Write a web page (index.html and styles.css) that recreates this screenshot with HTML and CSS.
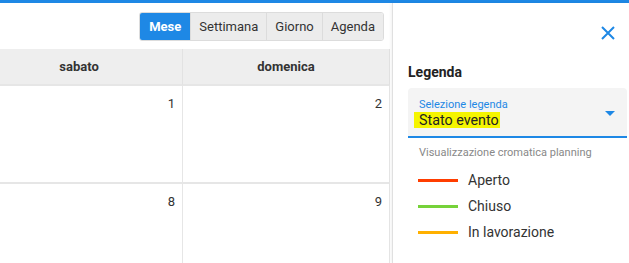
FILE: index.html
```html
<!DOCTYPE html>
<html lang="it">
<head>
  <meta charset="UTF-8" />
  <meta name="viewport" content="width=device-width, initial-scale=1.0"/>
  <title>Planning</title>
  <link rel="stylesheet" href="styles.css">
</head>
<body>

<div class="topbar"></div>

<div class="main">
  <!-- Calendario -->
  <div class="calendar">
    <div class="toolbar">
      <div class="view-switch">
        <button class="active">Mese</button>
        <button>Settimana</button>
        <button>Giorno</button>
        <button>Agenda</button>
      </div>
    </div>

    <div class="month">
      <div class="grid">
        <div class="head">sabato</div>
        <div class="head">domenica</div>
        <div class="day">1</div>
        <div class="day">2</div>
        <div class="day">8</div>
        <div class="day">9</div>
      </div>
    </div>
  </div>

  <!-- Pannello legenda -->
  <aside class="panel">
    <div class="panel-top">
      <button class="close" aria-label="Chiudi">
        <svg width="14" height="14" viewBox="0 0 14 14">
          <path d="M1 1 L13 13 M13 1 L1 13" stroke="#1e88e5" stroke-width="2" fill="none"/>
        </svg>
      </button>
    </div>

    <h3 class="panel-title">Legenda</h3>

    <div class="select">
      <div class="select-text">
        <span class="select-label">Selezione legenda</span>
        <span class="select-value"><mark>Stato evento</mark></span>
      </div>
      <span class="select-arrow"></span>
    </div>
    <div class="hint">Visualizzazione cromatica planning</div>

    <ul class="legend">
      <li><span class="swatch open"></span>Aperto</li>
      <li><span class="swatch closed"></span>Chiuso</li>
      <li><span class="swatch working"></span>In lavorazione</li>
    </ul>
  </aside>
</div>

</body>
</html>
```

FILE: styles.css
```css
* {
  margin: 0;
  padding: 0;
  box-sizing: border-box;
}

html, body {
  width: 629px;
  height: 263px;
  overflow: hidden;
}

body {
  font-family: Roboto, "Liberation Sans", Arial, sans-serif;
  color: #333;
  background-color: #fff;
}

.topbar {
  height: 3px;
  background-color: #1e88e5;
}

.main {
  display: flex;
  height: 260px;
}

/* Calendario */
.calendar {
  width: 392px;
  flex-shrink: 0;
  overflow: hidden;
}

.toolbar {
  display: flex;
  justify-content: flex-end;
  padding: 9px 8px 0 0;
  height: 46px;
}

.view-switch {
  display: flex;
  height: 29px;
  border: 1px solid #dcdcdc;
  border-radius: 3px;
  overflow: hidden;
}

.view-switch button {
  font-family: inherit;
  font-size: 13px;
  color: #333;
  background-color: #ececec;
  border: none;
  border-left: 1px solid #dcdcdc;
  padding: 0 8px;
  cursor: pointer;
}

.view-switch button:first-child {
  border-left: none;
}

.view-switch button.active {
  background-color: #1e88e5;
  color: #fff;
  font-weight: bold;
  padding: 0 9px;
}

.month {
  overflow: hidden;
}

.grid {
  display: grid;
  grid-template-columns: 207px 207px;
  grid-template-rows: 37px 98px 98px;
  margin-left: -24px;
  width: 416px;
}

.head {
  background-color: #eeeeee;
  border-right: 1px solid #e2e2e2;
  border-bottom: 2px solid #e6e6e6;
  font-size: 13px;
  font-weight: bold;
  display: flex;
  align-items: center;
  justify-content: center;
}

.day {
  border-right: 1px solid #e6e6e6;
  border-bottom: 2px solid #e6e6e6;
  font-size: 13px;
  text-align: right;
  padding: 10px 7px 0 0;
}

/* Pannello legenda */
.panel {
  flex: 1;
  border-left: 1px solid #e0e0e0;
  box-shadow: -1px 0 3px rgba(0,0,0,0.06);
  padding: 0 2px 0 15px;
}

.panel-top {
  display: flex;
  justify-content: flex-end;
  padding: 23px 12px 0 0;
  height: 59px;
}

.close {
  background: none;
  border: none;
  width: 14px;
  height: 14px;
  cursor: pointer;
}

.close svg {
  display: block;
}

.panel-title {
  font-size: 14px;
  font-weight: bold;
  color: #222;
  line-height: 20px;
  margin-bottom: 6px;
}

.select {
  display: flex;
  align-items: center;
  justify-content: space-between;
  height: 50px;
  background-color: #f4f4f4;
  border-radius: 4px 4px 0 0;
  border-bottom: 2px solid #1e88e5;
  padding: 0 12px 0 6px;
}

.select-text {
  display: flex;
  flex-direction: column;
  padding-top: 2px;
}

.select-label {
  font-size: 11px;
  color: #1e88e5;
  padding-left: 5px;
  line-height: 13px;
}

.select-value {
  font-size: 14.3px;
  line-height: 18px;
}

.select-value mark {
  background-color: #f5f500;
  color: #222;
  padding: 0 1px 0 5px;
}

.select-arrow {
  width: 0;
  height: 0;
  border-left: 5px solid transparent;
  border-right: 5px solid transparent;
  border-top: 5px solid #1e88e5;
  margin-top: 2px;
}

.hint {
  font-size: 11px;
  color: #888;
  padding: 8px 0 0 11px;
  line-height: 13px;
}

.legend {
  list-style: none;
  padding: 8px 0 0 10px;
}

.legend li {
  display: flex;
  align-items: center;
  gap: 10px;
  font-size: 14px;
  color: #333;
  height: 26px;
}

.swatch {
  width: 40px;
  height: 3px;
}

.swatch.open {
  background-color: #ff3d00;
}

.swatch.closed {
  background-color: #76d23a;
}

.swatch.working {
  background-color: #ffb000;
}
```
